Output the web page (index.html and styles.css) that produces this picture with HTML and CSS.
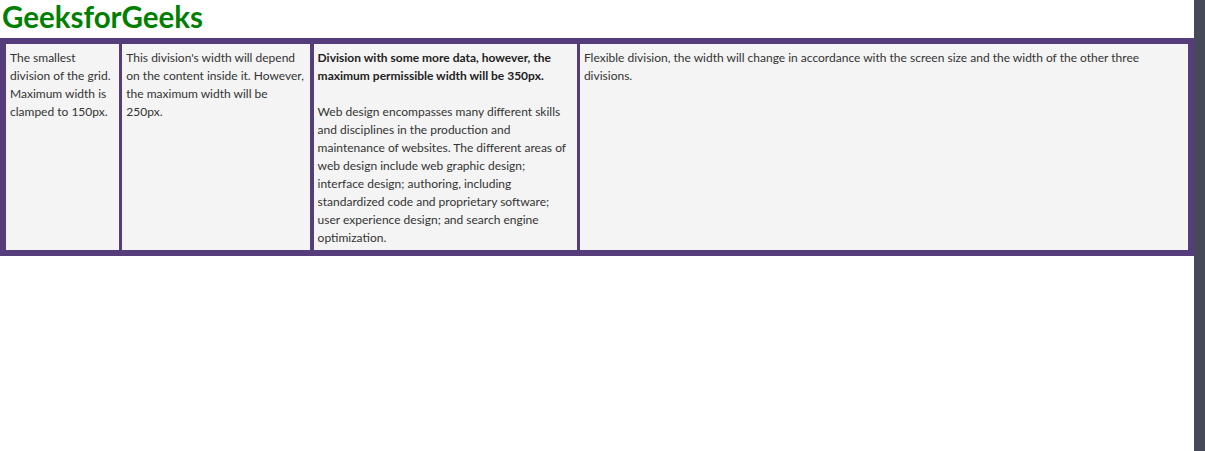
FILE: index.html
```html
<!DOCTYPE html>
<html lang="en">
<head>
  <meta charset="UTF-8" />
  <meta name="viewport" content="width=device-width, initial-scale=1.0" />
  <title>CSS Grid minmax</title>
  <link rel="stylesheet" href="styles.css">
</head>
<body>

  <div class="page">
    <h1>GeeksforGeeks</h1>
    <div class="grid">
      <div class="cell">The smallest division of the grid. Maximum width is clamped to 150px.</div>
      <div class="cell">This division's width will depend on the content inside it. However, the maximum width will be 250px.</div>
      <div class="cell">
        <b>Division with some more data, however, the maximum permissible width will be 350px.</b>
        <br /><br />
        Web design encompasses many different skills and disciplines in the production and maintenance of websites. The different areas of web design include web graphic design; interface design; authoring, including standardized code and proprietary software; user experience design; and search engine optimization.
      </div>
      <div class="cell">Flexible division, the width will change in accordance with the screen size and the width of the other three divisions.</div>
    </div>
  </div>

  <div class="side-strip"></div>

</body>
</html>
```

FILE: styles.css
```css
* {
  margin: 0;
  padding: 0;
  box-sizing: border-box;
}

html, body {
  height: 100%;
}

body {
  display: flex;
  background: #fff;
  font-family: 'Segoe UI', Lato, sans-serif;
  overflow: hidden;
}

.page {
  flex: 1;
}

h1 {
  color: #008000;
  font-size: 29.5px;
  font-weight: 700;
  line-height: 34px;
  padding-left: 2px;
  margin-bottom: 4px;
}

.grid {
  display: grid;
  grid-template-columns: 113px 188px 263px 1fr;
  gap: 3.3px;
  padding: 5.5px 6px 5.5px 6px;
  background-color: #553d7c;
}

.cell {
  background-color: #f4f4f4;
  color: #333;
  font-size: 12px;
  line-height: 18px;
  padding: 5.5px 4px 3px;
}

.cell b {
  color: #222;
}

.side-strip {
  width: 11px;
  background-color: #464a58;
}
```
